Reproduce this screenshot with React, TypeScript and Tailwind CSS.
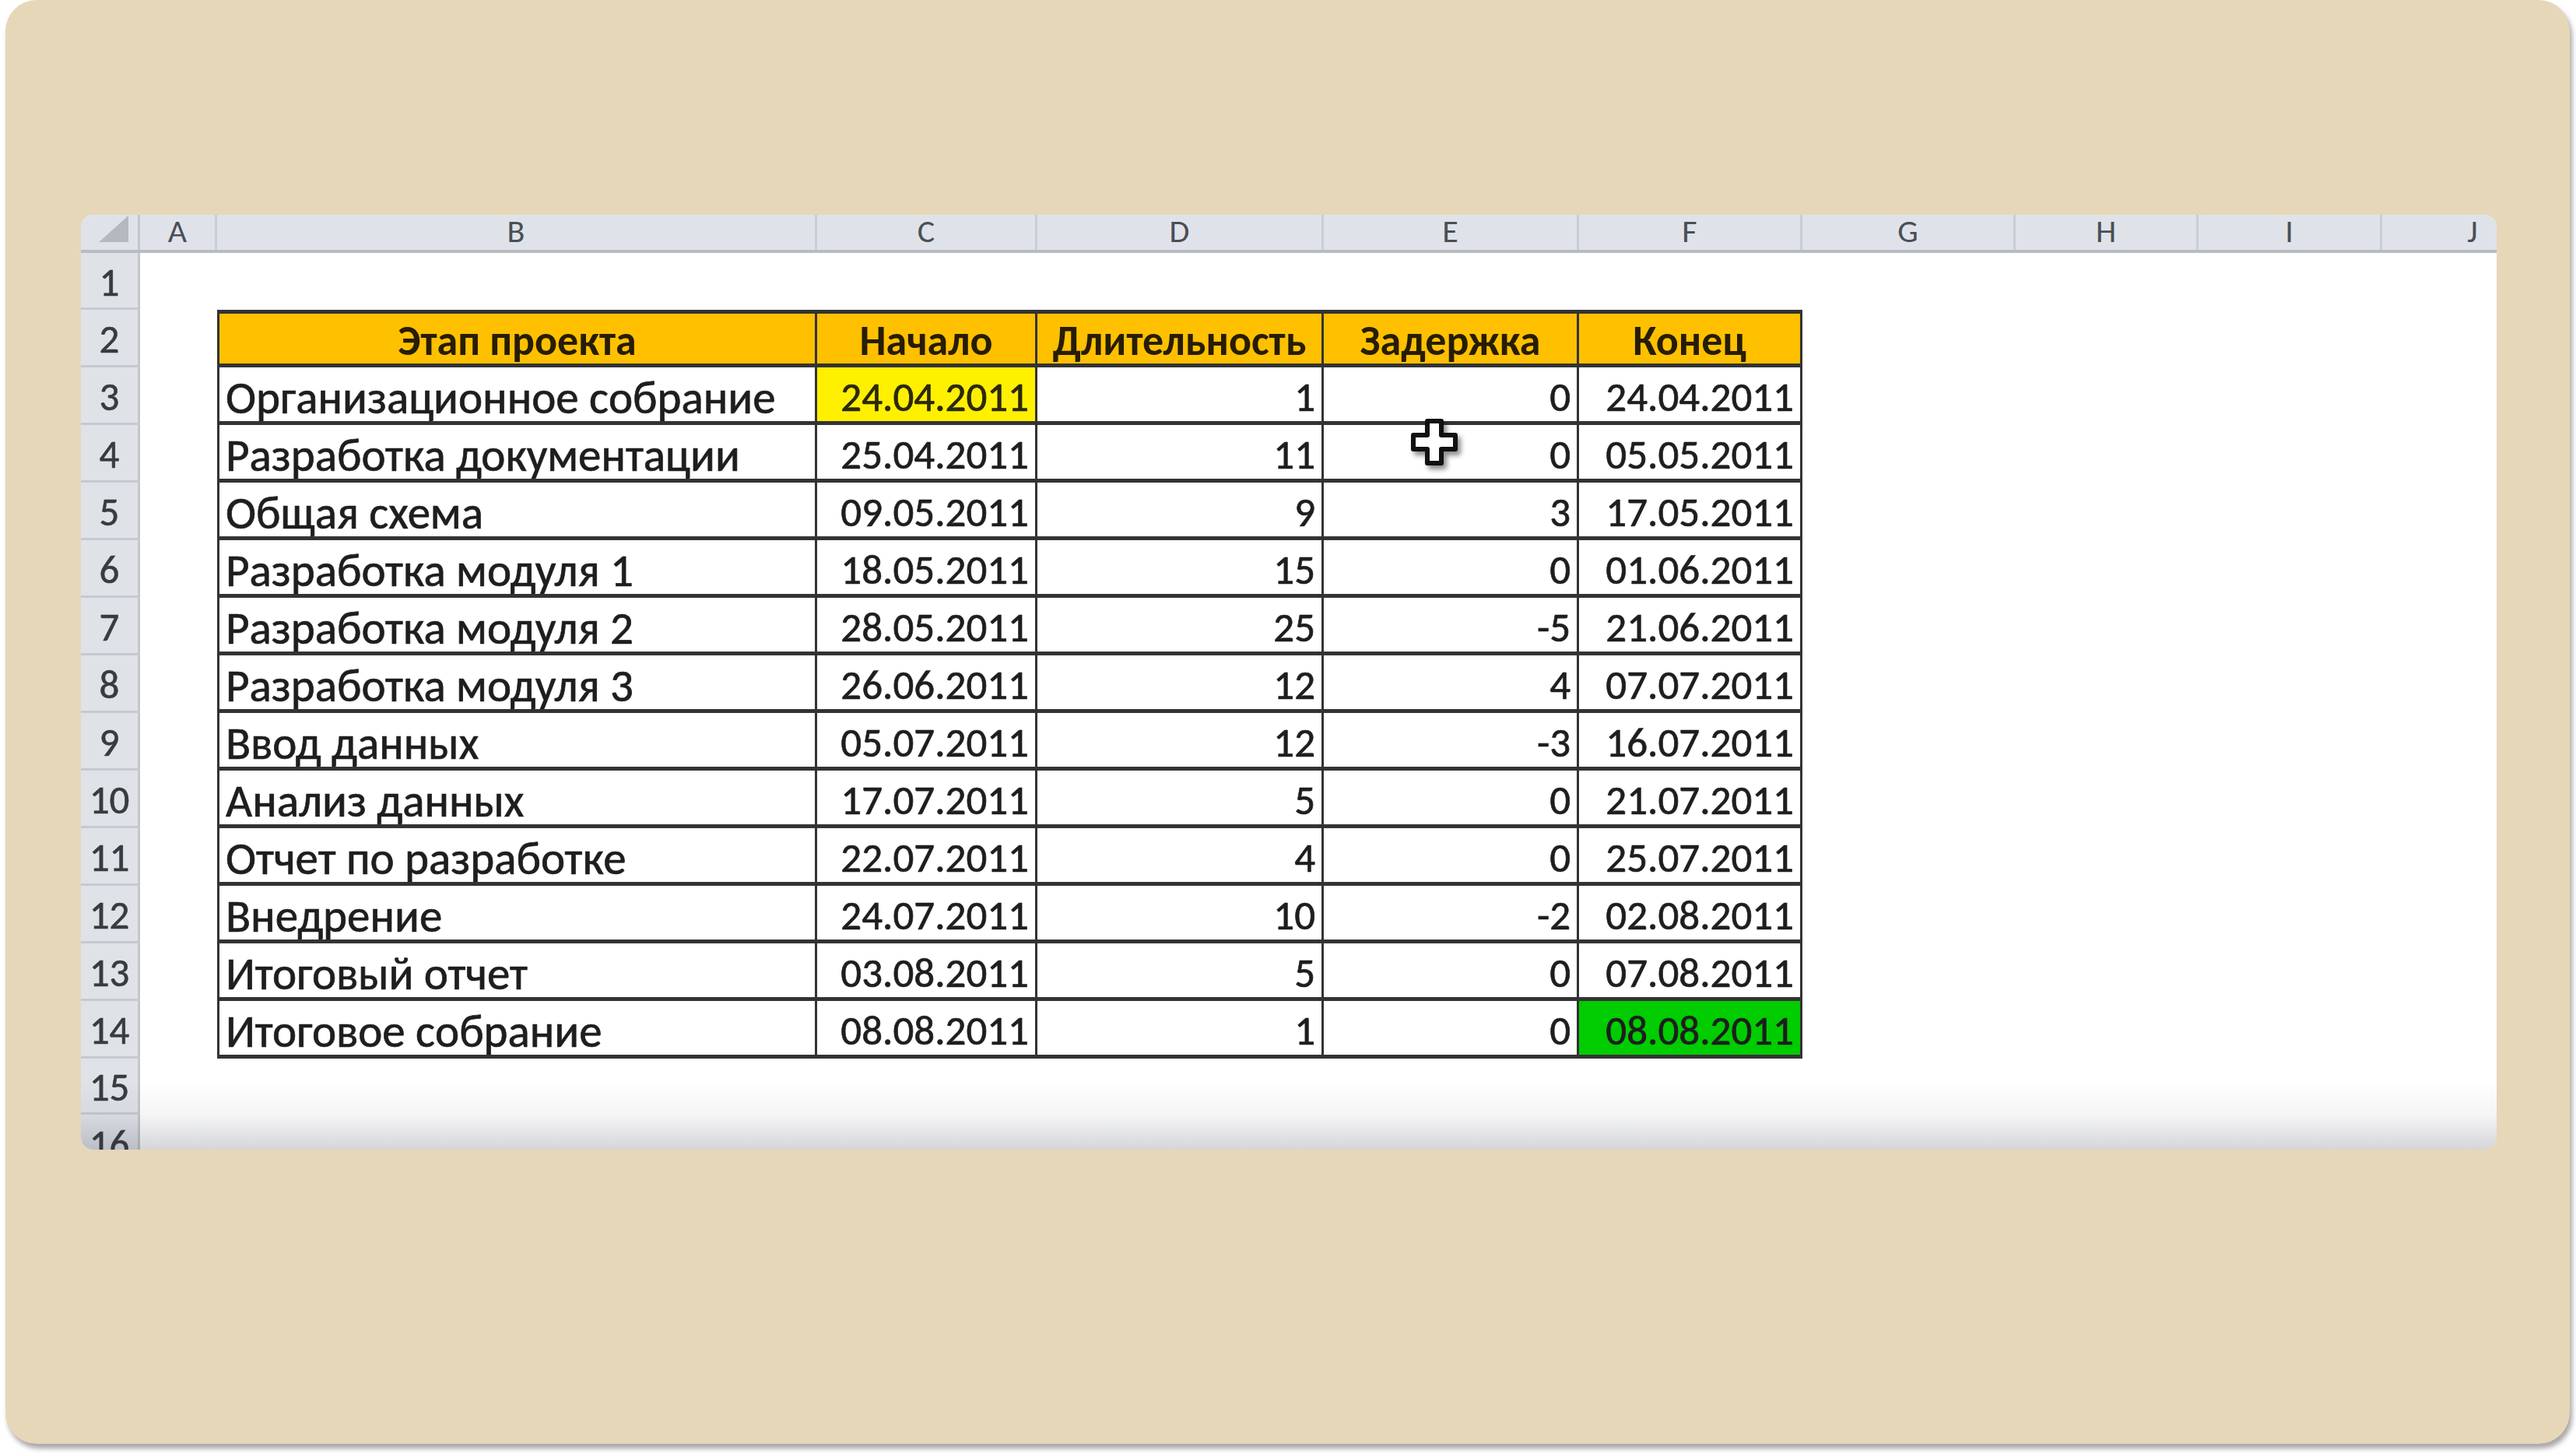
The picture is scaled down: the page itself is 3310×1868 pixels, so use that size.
import clsx from 'clsx';

const columns = [
  { id: 'A', w: 'w-[99px]' },
  { id: 'B', w: 'w-[771px]' },
  { id: 'C', w: 'w-[283px]' },
  { id: 'D', w: 'w-[368px]' },
  { id: 'E', w: 'w-[328px]' },
  { id: 'F', w: 'w-[287px]' },
  { id: 'G', w: 'w-[274px]' },
  { id: 'H', w: 'w-[235px]' },
  { id: 'I', w: 'w-[236px]' },
  { id: 'J', w: 'w-[235px]' },
];

const tableWidths = ['w-[771px]', 'w-[283px]', 'w-[368px]', 'w-[328px]', 'w-[287px]'];

const header = ['Этап проекта', 'Начало', 'Длительность', 'Задержка', 'Конец'];

const stages = [
  ['Организационное собрание', '24.04.2011', '1', '0', '24.04.2011'],
  ['Разработка документации', '25.04.2011', '11', '0', '05.05.2011'],
  ['Общая схема', '09.05.2011', '9', '3', '17.05.2011'],
  ['Разработка модуля 1', '18.05.2011', '15', '0', '01.06.2011'],
  ['Разработка модуля 2', '28.05.2011', '25', '-5', '21.06.2011'],
  ['Разработка модуля 3', '26.06.2011', '12', '4', '07.07.2011'],
  ['Ввод данных', '05.07.2011', '12', '-3', '16.07.2011'],
  ['Анализ данных', '17.07.2011', '5', '0', '21.07.2011'],
  ['Отчет по разработке', '22.07.2011', '4', '0', '25.07.2011'],
  ['Внедрение', '24.07.2011', '10', '-2', '02.08.2011'],
  ['Итоговый отчет', '03.08.2011', '5', '0', '07.08.2011'],
  ['Итоговое собрание', '08.08.2011', '1', '0', '08.08.2011'],
];

const RowNum = ({ n }: { n: number }) => (
  <div className="flex w-[76px] shrink-0 items-center justify-center border-r-[3px] border-b-[3px] border-r-[#c2c7cd] border-b-[#c5cad0] bg-[#dfe3e8] pt-[6px] text-[51px] text-[#383b40] [-webkit-text-stroke:0.6px_#383b40]">
    {n}
  </div>
);

const CursorCross = () => (
  <svg
    width="64"
    height="64"
    viewBox="0 0 64 64"
    className="absolute left-[1707px] top-[260px] drop-shadow-[4px_5px_3px_rgba(0,0,0,0.45)]"
  >
    <path
      d="M23 5 H41 V23 H59 V41 H41 V59 H23 V41 H5 V23 H23 Z"
      fill="#fff"
      stroke="#111"
      strokeWidth="6"
      strokeLinejoin="round"
    />
  </svg>
);

export default function App() {
  return (
    <div className="h-[1868px] w-[3310px] bg-white pb-[13px] pl-[7px] pr-[8px] font-['Carlito','Liberation_Sans',sans-serif]">
      <div className="h-[1855px] w-full rounded-[40px] bg-[#e6d7b9] pl-[97px] pt-[276px] shadow-[3px_6px_6px_rgba(0,0,0,0.35)]">
        <div className="relative flex h-[1201px] w-[3104px] flex-col overflow-hidden rounded-[16px] bg-white">
          {/* column letters */}
          <div className="flex h-[49px] shrink-0 border-b-[4px] border-[#b7bcc3] bg-[#dfe3e9]">
            <div className="flex w-[76px] shrink-0 items-end justify-end border-r-[3px] border-[#c2c7cd] pb-[10px] pr-[12px]">
              <div className="h-0 w-0 border-b-[34px] border-l-[38px] border-b-[#b4b9bf] border-l-transparent" />
            </div>
            {columns.map((c) => (
              <div
                key={c.id}
                className={clsx(
                  c.w,
                  'flex h-[45px] shrink-0 items-center justify-center border-r-[3px] border-[#c9ced4] pb-[4px] text-[42px] leading-[41px] text-[#4a4f56]'
                )}
              >
                {c.id}
              </div>
            ))}
          </div>

          {/* row 1 */}
          <div className="flex h-[73px] shrink-0">
            <RowNum n={1} />
          </div>

          {/* table rows 2-14 */}
          {[header, ...stages].map((row, r) => {
            const isHead = r === 0;
            return (
              <div key={r} className="flex h-[74px] shrink-0">
                <RowNum n={r + 2} />
                <div className="w-[99px] shrink-0" />
                {row.map((v, i) => (
                  <div
                    key={i}
                    className={clsx(
                      tableWidths[i],
                      'flex shrink-0 items-center overflow-hidden whitespace-nowrap border-b-[5px] border-r-[3px] border-[#333] px-[8px]',
                      i === 0 && 'border-l-[3px]',
                      isHead
                        ? 'justify-center border-t-[5px] bg-[#ffc000] pt-[6px] text-[54px] font-bold text-[#261d04]'
                        : i === 0
                          ? 'justify-start pt-[9px] text-[59px] text-[#1e1e1e] [-webkit-text-stroke:0.7px_#1e1e1e]'
                          : 'justify-end pt-[9px] text-[53px] text-[#1e1e1e] [-webkit-text-stroke:0.7px_#1e1e1e]',
                      r === 1 && i === 1 && 'bg-[#fff000] text-[#2d2a00]',
                      r === 12 && i === 4 && 'bg-[#00cc00] text-[#0b560b] [-webkit-text-stroke:0.7px_#0b560b]'
                    )}
                  >
                    {v}
                  </div>
                ))}
              </div>
            );
          })}

          {/* rows 15, 16 */}
          <div className="flex h-[72px] shrink-0">
            <RowNum n={15} />
          </div>
          <div className="flex h-[74px] shrink-0">
            <RowNum n={16} />
          </div>

          <CursorCross />

          {/* bottom fade of the captured window */}
          <div className="pointer-events-none absolute bottom-0 left-0 right-0 h-[110px] bg-linear-to-b from-transparent from-20% via-[#2a2f3c]/5 via-60% to-[#2a2f3c]/20" />
        </div>
      </div>
    </div>
  );
}
